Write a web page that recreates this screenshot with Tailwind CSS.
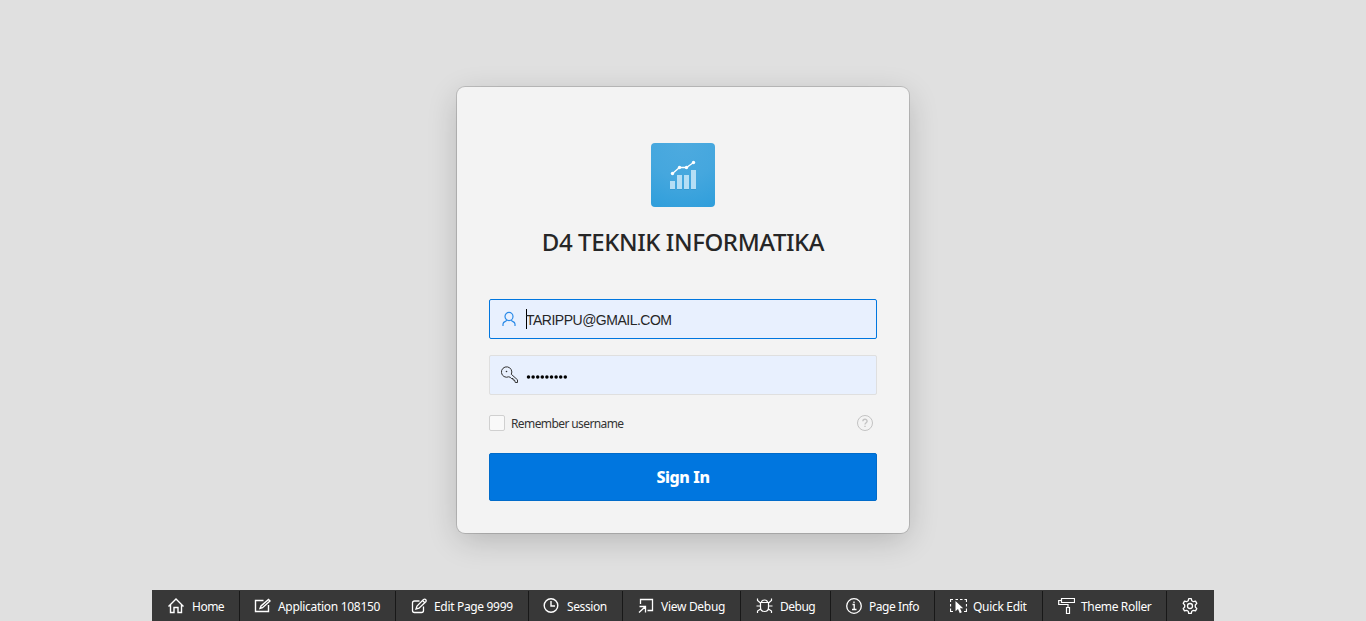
<!DOCTYPE html>
<html lang="en">
<head>
<meta charset="utf-8">
<title>D4 TEKNIK INFORMATIKA</title>
<script src="https://cdn.jsdelivr.net/npm/@tailwindcss/browser@4"></script>
</head>
<body class="flex h-[621px] flex-col items-center overflow-hidden bg-[#e0e0e0] font-['Noto_Sans','Open_Sans',sans-serif] text-[#262626]">
<main class="mt-[87px] flex h-[446px] w-[452px] shrink-0 flex-col rounded-lg bg-[#f3f3f3] px-8 pt-14 shadow-[0_0_0_1px_rgba(0,0,0,0.15),0_8px_32px_-2px_rgba(0,0,0,0.2)]">
  <div class="h-16 w-16 self-center rounded bg-[radial-gradient(circle_at_50%_0%,#4daadf_0%,#45a7de_50%,#2f9edb_100%)]">
    <svg class="h-16 w-16" viewBox="0 0 64 64" fill="none">
      <path fill="#b5def5" d="M19 38h5v8h-5zM26 32h5v14h-5zM33 32h5v14h-5zM40 27h5v19h-5z"/>
      <path stroke="#2b8fc7" stroke-opacity=".5" d="M19 46.500h5M26 46.500h5M33 46.500h5M40 46.500h5"/>
      <path stroke="#fff" stroke-width="1.300" d="M21.500 30.500L28.500 24.500H35.500L42.500 19.500"/>
      <g fill="#fff"><circle cx="21.500" cy="30.500" r="1.700"/><circle cx="28.500" cy="24.500" r="1.700"/><circle cx="35.500" cy="24.500" r="1.700"/><circle cx="42.500" cy="19.500" r="1.700"/></g>
    </svg>
  </div>
  <h1 class="mt-[19px] h-8 self-center text-2xl leading-8 font-medium tracking-[-0.4px] whitespace-nowrap">D4 TEKNIK INFORMATIKA</h1>
  <div class="mt-[41px] flex h-10 items-center rounded-[2px] border border-[#0076df] bg-[#e8f0fe] pl-[11px]">
    <svg class="h-4 w-4 text-[#2a8ae8]" viewBox="0 0 16 16" fill="none" stroke="currentColor" stroke-width="1.200"><ellipse cx="8" cy="5.500" rx="4" ry="4.100"/><path d="M6 9.200C5.600 10.600 2 10.200 2 13V15M10 9.200C10.400 10.600 14 10.200 14 13V15"/></svg>
    <span class="ml-[9px] h-5 w-px bg-black"></span>
    <span class="mt-0.5 -ml-px font-['Liberation_Sans',sans-serif] text-sm leading-5 tracking-[-0.5px] whitespace-nowrap">TARIPPU@GMAIL.COM</span>
  </div>
  <div class="mt-4 flex h-10 items-center rounded-[2px] border border-[#dfdfdf] bg-[#e8f0fe] pl-[11px]">
    <svg class="h-[18px] w-[18px] text-[#333]" viewBox="0 0 18 18" fill="none" stroke="currentColor"><path d="M10.300 8.300A5.200 5.200 0 1 0 7.700 10.800L9.300 11.300L10.300 12.500H12V14H13.500L14.300 16.500H16.500V13.800L10.300 8.300"/><circle cx="5.500" cy="5.500" r=".8" fill="currentColor" stroke="none"/></svg>
    <svg class="mt-[3px] ml-[7px] h-2 w-11 text-black" viewBox="0 0 44 8" fill="currentColor"><circle cx="2.500" cy="4" r="1.750"/><circle cx="7.100" cy="4" r="1.750"/><circle cx="11.700" cy="4" r="1.750"/><circle cx="16.300" cy="4" r="1.750"/><circle cx="20.900" cy="4" r="1.750"/><circle cx="25.500" cy="4" r="1.750"/><circle cx="30.100" cy="4" r="1.750"/><circle cx="34.700" cy="4" r="1.750"/><circle cx="39.300" cy="4" r="1.750"/></svg>
  </div>
  <div class="mt-5 flex h-4 items-center">
    <span class="h-4 w-4 rounded-[2px] border border-[#d0d0d0] bg-[#f9f9f9]"></span>
    <span class="mt-0.5 ml-1.5 text-xs leading-4 tracking-[-0.6px] whitespace-nowrap text-[#333]">Remember username</span>
    <svg class="mr-1 ml-auto h-4 w-4 text-[#c3c3c3]" viewBox="0 0 16 16" fill="none" stroke="currentColor"><circle cx="8" cy="8" r="7.500"/><path d="M5.900 6.300C5.900 3.500 10.100 3.500 10.100 6.200C10.100 7.700 8 7.700 8 9.500M8 10.800V12" stroke-width="1.400"/></svg>
  </div>
  <button class="mt-[22px] h-12 rounded-[2px] border border-[#006bca] bg-[#0076df] text-base font-extrabold tracking-[-0.4px] text-white">Sign In</button>
</main>
<nav class="mt-[57px] flex h-[31px] w-[1062px] shrink-0 bg-[#383838] pt-px text-xs leading-4 whitespace-nowrap text-white [&>a]:flex [&>a]:shrink-0 [&>a]:items-center [&>a]:border-r [&>a]:border-[#181818] [&_svg]:shrink-0 [&_span]:mt-0.5">
  <a class="w-[88px] pl-4"><svg class="h-4 w-4" viewBox="0 0 16 16" fill="none" stroke="currentColor" stroke-width="1.400"><path d="M.5 8.500L8 1L15.500 8.500M2.500 7V14.500H6V9.500H10V14.500H13.500V7"/></svg><span class="ml-2 tracking-[-0.5px]">Home</span></a>
  <a class="w-[156px] pl-[14px]"><svg class="h-4 w-[17px]" viewBox="0 0 17 16" fill="none" stroke="currentColor" stroke-width="1.400"><path d="M9.500 2.500H1.500V13.500H14.500V7M6 10.500L7 8L14.500 1.500L16 3L8.500 9.700Z"/></svg><span class="ml-[7px] tracking-[-0.3px]">Application 108150</span></a>
  <a class="w-[133px] pl-[15px]"><svg class="h-4 w-4" viewBox="0 0 16 16" fill="none" stroke="currentColor" stroke-width="1.300"><path d="M8.500 3H3.500Q1.500 3 1.500 5V12.500Q1.500 14.500 3.500 14.500H10.500Q12.500 14.500 12.500 12.500V8.500M5 11L6 8L12.500 1.500Q14 .7 15 2Q15.500 3 14.800 3.800L8 10.200ZM11.500 2.500L13.800 4.800"/></svg><span class="ml-[7px] tracking-[-0.33px]">Edit Page 9999</span></a>
  <a class="w-[94px] pl-[14px]"><svg class="h-4 w-4" viewBox="0 0 16 16" fill="none" stroke="currentColor" stroke-width="1.400"><circle cx="8" cy="7.500" r="6.800"/><path d="M8 3V8H12"/></svg><span class="ml-2 tracking-[-0.4px]">Session</span></a>
  <a class="w-[118px] pl-[15px]"><svg class="h-4 w-4" viewBox="0 0 16 16" fill="none" stroke="currentColor" stroke-width="1.300"><path d="M2.500 6V1.500H14.500V12.500H9.500M1.500 8.500H7.500V14.500M7.500 8.500L1 14.500"/></svg><span class="ml-[7px] tracking-[-0.3px]">View Debug</span></a>
  <a class="w-[90px] pl-[15px]"><svg class="h-4 w-[17px]" viewBox="0 0 17 16" fill="none" stroke="currentColor" stroke-width="1.200"><path d="M4.500 4.500H12.500V9.500Q12.500 13.500 8.500 13.500T4.500 9.500ZM5.500 4.500Q5.500 2 8.500 2T11.500 4.500M1.500 .5V2.500L4.500 5M15.500 .5V2.500L12.500 5M.5 8H4.500M12.500 8H16.500M1.500 15V13L4.500 11M15.500 15V13L12.500 11"/></svg><span class="ml-[7px] tracking-[-0.5px]">Debug</span></a>
  <a class="w-[104px] pl-[15px]"><svg class="h-4 w-4" viewBox="0 0 16 16" fill="none" stroke="currentColor" stroke-width="1.300"><circle cx="8" cy="8" r="7.300"/><path d="M6.500 6.500H8.200V11.500M6 11.500H10.500M8 3.500V5"/></svg><span class="ml-[7px] tracking-[-0.45px]">Page Info</span></a>
  <a class="w-[108px] pl-[15px]"><svg class="h-4 w-[17px]" viewBox="0 0 17 16" fill="none" stroke="currentColor" stroke-width="1.200"><path d="M.5 4V1.500H3M5.500 1.500H8M10 1.500H12.500M14.500 1.500H16.500V4M.5 6V8.500M.5 10.500V13.500H3M16.500 6V8.500M16.500 10.500V13.500H14"/><path d="M5.500 3V13.200L8 11L9.800 15.200L11.800 14.300L10 10.300H13.200Z" fill="currentColor" stroke="none"/></svg><span class="ml-1.5 tracking-[-0.3px]">Quick Edit</span></a>
  <a class="w-[124px] pl-[15px]"><svg class="h-[18px] w-[17px]" viewBox="0 0 17 18" fill="none" stroke="currentColor" stroke-width="1.200"><path d="M3.500 1.500H16.500V5.500H3.500ZM3.500 3.500H.7V7.500H10V10.500M8.500 10.500H11.500V16.500H8.500Z"/></svg><span class="ml-1.5 tracking-[-0.35px]">Theme Roller</span></a>
  <a class="w-[47px] border-r-0! pl-[15px]"><svg class="h-4 w-4" viewBox="0 0 16 16" fill="none" stroke="currentColor" stroke-width="1.300" stroke-linejoin="round"><path d="M6.700.7H9.300L9.800 2.800L11.400 3.700L13.500 3.100L14.800 5.400L13.300 7V9L14.800 10.600L13.500 12.900L11.400 12.300L9.800 13.200L9.300 15.300H6.700L6.200 13.200L4.600 12.300L2.500 12.900L1.200 10.600L2.700 9V7L1.200 5.400L2.500 3.100L4.600 3.700L6.200 2.800Z"/><circle cx="8" cy="8" r="2.500"/></svg></a>
</nav>
</body>
</html>
